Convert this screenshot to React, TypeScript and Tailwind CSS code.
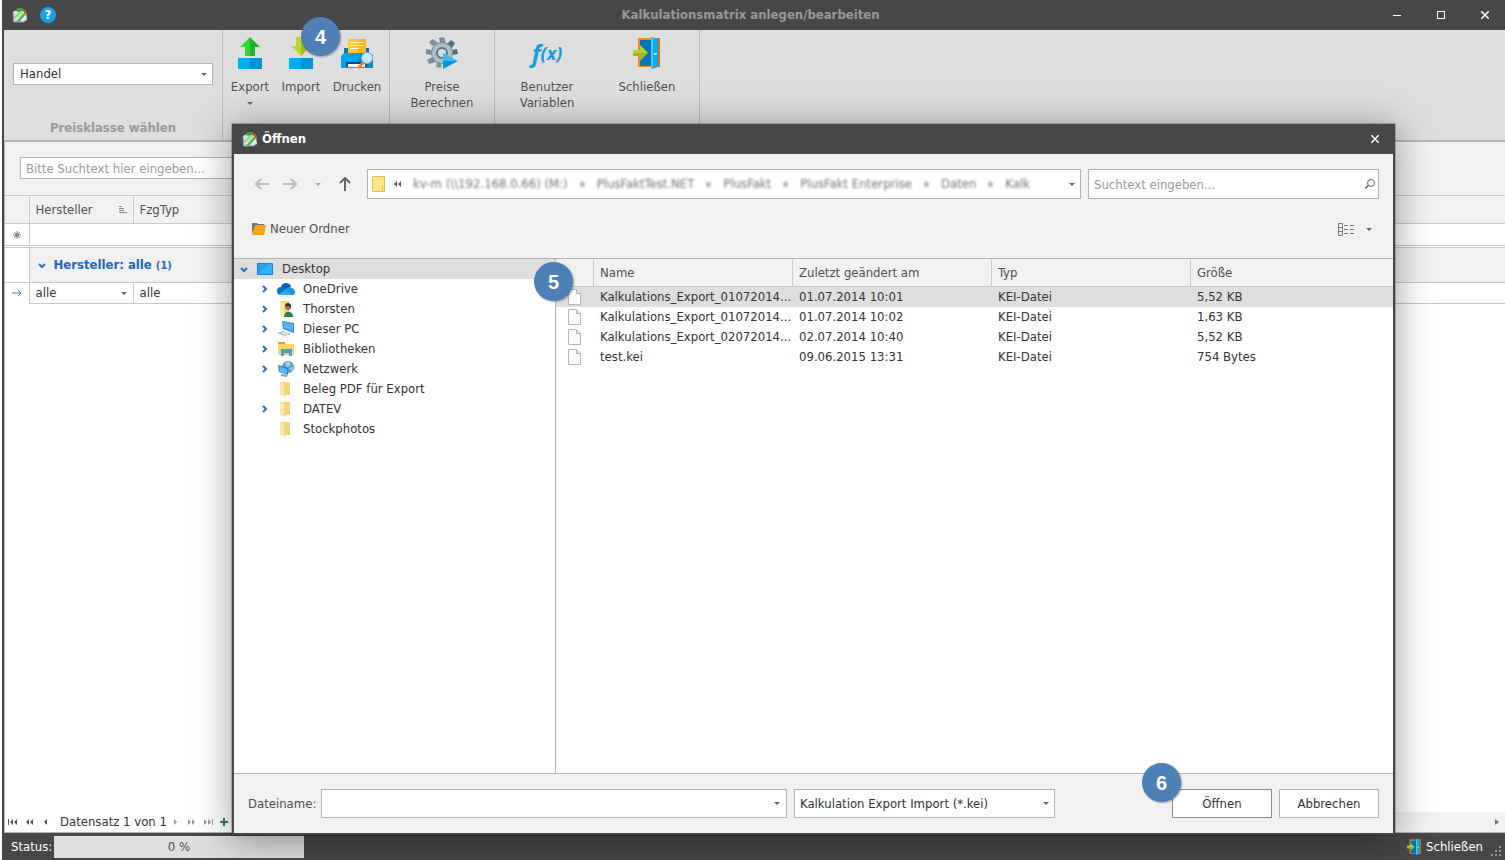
import { useState } from 'react';
import type { ReactNode } from 'react';

interface TreeItem {
  label: string;
  icon: ReactNode;
  expandable: boolean;
}

interface FileEntry {
  id: number;
  name: string;
  modified: string;
  type: string;
  size: string;
}

function AppIcon() {
  return (
    <svg className="size-4 shrink-0" viewBox="0 0 16 16">
      <path d="M1 5l3-2 10 1 1 9-3 2H1z" fill="#dcdcf4" />
      <path d="M1 6l1 9h10l2-2" fill="none" stroke="#8d8ac4" />
      <path d="M3 4c2-4 8-4 9-1l-4 2z" fill="#35a52c" />
      <path d="M10 3l4 0v5z" fill="#d9463b" />
      <path d="M4 14l7-9 3 2-7 8z" fill="#3fc234" />
      <path d="M2 10l6-6 2 1-7 7z" fill="#7ddf6d" />
      <path d="M5 13l7-8" stroke="#ecffe6" />
      <path d="M10 13l4-4" stroke="#fff" />
    </svg>
  );
}

function DoorIcon({ className }: { className: string }) {
  return (
    <svg className={className} viewBox="0 0 32 32">
      <path d="M7 1h22v29H7z" fill="#f08a1c" />
      <path d="M26 1h3v29h-3z" fill="#c96f20" />
      <path d="M9 3h12v26H9z" fill="#0577b9" />
      <path d="M20 0l7 2v28l-7 2z" fill="#00aeef" />
      <path d="M20 0l2 1v30l-2 1z" fill="#49c9f8" />
      <path d="M23 16h3v1l-3 1z" fill="#e9f8ff" />
      <path d="M2 13h7V8l8 8H2z" fill="#b5d334" />
      <path d="M2 16h15l-8 8v-5H2z" fill="#9dbb20" />
    </svg>
  );
}

function ExportIcon() {
  return (
    <svg className="size-8" viewBox="0 0 32 32">
      <path d="M16 0L6 10h5v9h5z" fill="#35d435" />
      <path d="M16 0l10 10h-5v9h-5z" fill="#1fb52a" />
      <path d="M4 21h12v11H4z" fill="#00aeef" />
      <path d="M16 21h12v11H16z" fill="#0093d6" />
    </svg>
  );
}

function ImportIcon() {
  return (
    <svg className="size-8" viewBox="0 0 32 32">
      <path d="M11 0h5v19L6 9h5z" fill="#bcd631" />
      <path d="M16 0h5v9h5L16 19z" fill="#a3bf1c" />
      <path d="M4 21h12v11H4z" fill="#00aeef" />
      <path d="M16 21h12v11H16z" fill="#0093d6" />
    </svg>
  );
}

function PrintIcon() {
  return (
    <svg className="size-8" viewBox="0 0 32 32">
      <path d="M3 11h25v8H3z" fill="#0577b9" />
      <path d="M0 19l3-3h26l3 3v12H0z" fill="#00a4e8" />
      <path d="M16 16h13l3 3v12H16z" fill="#0590d2" />
      <path d="M7 2h18v14H7z" fill="#fdc830" />
      <path d="M16 2h9v14h-9z" fill="#fab91d" />
      <path d="M9 5.500h13M9 8.500h13M9 11.500h9" stroke="#fff3c0" />
      <path d="M5 25h21v5H5z" fill="#0a4f8f" />
      <path d="M7 27h17v3H7z" fill="#f4fbff" />
      <path d="M17 31l6-6" stroke="#e8892b" strokeWidth="3" />
      <circle cx="26" cy="21" r="5" fill="#bfe8fb" stroke="#edf8fd" />
      <circle cx="26" cy="21" r="5.500" fill="none" stroke="#77aecb" />
    </svg>
  );
}

function GearIcon() {
  return (
    <svg className="size-8" viewBox="0 0 32 32">
      <g fill="#7b929e">
        <path d="M14 6l-1-5 5-1 2 6z" />
        <path d="M6 9L3 5l4-3 5 4z" />
        <path d="M5 13l-5-1-0 5 5 1z" />
        <path d="M6 20l-5 3 2 4 7-2z" />
        <path d="M11 25l-1 5 5 1 1-6z" />
        <path d="M21 7l4-4 4 3-3 5z" fill="#566d79" />
        <path d="M26 13l5-1 1 5-5 1z" fill="#566d79" />
      </g>
      <circle cx="16" cy="16" r="11" fill="#7b929e" />
      <circle cx="16" cy="16" r="7.500" fill="none" stroke="#b0bfc7" strokeWidth="5" />
      <circle cx="16" cy="16" r="5" fill="#dedede" stroke="#5f7784" strokeWidth="2" />
      <path d="M17 16l15 8H17z" fill="#35bdf5" />
      <path d="M17 24h15l-15 8z" fill="#0593dc" />
    </svg>
  );
}

function FxIcon() {
  return (
    <span
      className="flex h-8 items-center font-['Open_Sans',sans-serif] font-bold text-[#129fe0] italic"
      aria-hidden="true"
    >
      <span className="text-2xl leading-8">f</span>
      <span className="text-lg leading-8">(x)</span>
    </span>
  );
}

function FolderIcon() {
  return (
    <svg className="h-4 w-[18px]" viewBox="0 0 18 16">
      <path d="M3 1h10v13H3z" fill="#f7d682" />
      <path d="M3 1l5 2v13l-5-2z" fill="#fbe7a8" />
      <path d="M8 3v12" stroke="#efcd76" />
      <path d="M12.500 10v4" stroke="#e3bd5b" />
    </svg>
  );
}

function FileIcon() {
  return (
    <svg className="h-4 w-[13px]" viewBox="0 0 13 16">
      <path d="M.5.5h8l4 4v11H.5z" fill="#fafafa" stroke="#b5b5b5" />
      <path d="M8.500.5v4h4" fill="#e6e6e6" stroke="#b5b5b5" />
    </svg>
  );
}

const treeItems: TreeItem[] = [
  {
    label: 'OneDrive',
    expandable: true,
    icon: (
      <svg className="h-4 w-[18px]" viewBox="0 0 18 16">
        <path d="M4 6c1-5 8-5 10-1l-5 6z" fill="#0a5fb4" />
        <circle cx="4" cy="10" r="4" fill="#1272c7" />
        <path d="M5 14l3-6c5-4 10 0 10 3s-2 3-3 3z" fill="#1f95e6" />
        <path d="M2 13l6-4 8 5H4z" fill="#2bb0f3" />
      </svg>
    ),
  },
  {
    label: 'Thorsten',
    expandable: true,
    icon: (
      <svg className="h-4 w-[18px]" viewBox="0 0 18 16">
        <path d="M3 0h9v13H3z" fill="#f5d37b" />
        <path d="M3 0l4 2v13l-4-2z" fill="#fbe7a8" />
        <circle cx="11" cy="6" r="3" fill="#a06d45" />
        <path d="M8 5c0-4 6-4 6 0v2l-2-2z" fill="#3b2f28" />
        <path d="M7 16c0-7 9-7 9 0z" fill="#2f7d52" />
      </svg>
    ),
  },
  {
    label: 'Dieser PC',
    expandable: true,
    icon: (
      <svg className="h-4 w-[18px]" viewBox="0 0 18 16">
        <path d="M5 0l12 2v10L6 8z" fill="#2d8fd6" />
        <path d="M6 1l10 2v7L7 7z" fill="#56b5f3" />
        <path d="M0 12l6-2 8 3-6 2z" fill="#b1b9bf" />
        <path d="M3 12l4-1 5 2-3 1z" fill="#e3e7ea" />
      </svg>
    ),
  },
  {
    label: 'Bibliotheken',
    expandable: true,
    icon: (
      <svg className="h-4 w-[18px]" viewBox="0 0 18 16">
        <path d="M1 1h7v3H1z" fill="#d9a032" />
        <path d="M1 3h16v11H1z" fill="#fcd467" />
        <path d="M4 15V8h11v7h-3v-3H7v3z" fill="#4c9bc9" />
      </svg>
    ),
  },
  {
    label: 'Netzwerk',
    expandable: true,
    icon: (
      <svg className="h-4 w-[18px]" viewBox="0 0 18 16">
        <circle cx="11" cy="6" r="6" fill="#5d9dbd" />
        <path d="M8 2l4-1 2 3-4 2zM12 7l4-1-1 4z" fill="#a8d5e6" />
        <path d="M1 4l10 3v7L2 11z" fill="#2381cc" />
        <path d="M2 5l8 3v5l-7-2z" fill="#56b8f5" />
        <path d="M4 14l6 1" stroke="#8d979e" strokeWidth="2" />
      </svg>
    ),
  },
  { label: 'Beleg PDF für Export', expandable: false, icon: <FolderIcon /> },
  { label: 'DATEV', expandable: true, icon: <FolderIcon /> },
  { label: 'Stockphotos', expandable: false, icon: <FolderIcon /> },
];

const files: FileEntry[] = [
  { id: 1, name: 'Kalkulations_Export_01072014...', modified: '01.07.2014 10:01', type: 'KEI-Datei', size: '5,52 KB' },
  { id: 2, name: 'Kalkulations_Export_01072014...', modified: '01.07.2014 10:02', type: 'KEI-Datei', size: '1,63 KB' },
  { id: 3, name: 'Kalkulations_Export_02072014...', modified: '02.07.2014 10:40', type: 'KEI-Datei', size: '5,52 KB' },
  { id: 4, name: 'test.kei', modified: '09.06.2015 13:31', type: 'KEI-Datei', size: '754 Bytes' },
];

const crumbs = ['kv-m (\\\\192.168.0.66) (M:)', 'PlusFaktTest.NET', 'PlusFakt', 'PlusFakt Enterprise', 'Daten', 'Kalk'];

function Caret({ className = 'text-[#666]' }: { className?: string }) {
  return (
    <svg className={`h-[3px] w-1.5 shrink-0 ${className}`} viewBox="0 0 6 3">
      <path d="M0 0h6L3 3z" fill="currentColor" />
    </svg>
  );
}

function Chevron({ open = false }: { open?: boolean }) {
  return (
    <svg className="size-2 shrink-0" viewBox="0 0 8 8" fill="none" stroke="#2a6fc4" strokeWidth="2">
      <path d={open ? 'M1 3l3 3 3-3' : 'M2 1l3 3-3 3'} />
    </svg>
  );
}

function CloseX() {
  return (
    <svg className="size-2" viewBox="0 0 8 8" stroke="#fff" strokeWidth="1.500">
      <path d="M0 0l8 8M8 0L0 8" />
    </svg>
  );
}

function StepBadge({ value, className }: { value: number; className: string }) {
  return (
    <span
      className={`absolute z-20 flex size-[39px] items-center justify-center rounded-full bg-[#4d80b6] font-['Liberation_Sans',sans-serif] text-xl font-bold text-white shadow-[1px_1px_2px_rgba(0,0,0,0.35)] ${className}`}
    >
      {value}
    </span>
  );
}

interface RibbonButtonProps {
  icon: ReactNode;
  lines: string[];
  className: string;
  menu?: boolean;
  badge?: ReactNode;
}

function RibbonButton({ icon, lines, className, menu, badge }: RibbonButtonProps) {
  return (
    <button type="button" className={`relative flex flex-col items-center ${className}`}>
      {icon}
      <span className="mt-2.5 flex flex-col leading-4 text-[#505050]">
        {lines.map((line) => (
          <span key={line}>{line}</span>
        ))}
      </span>
      {menu && <Caret className="mt-[7px] text-[#666]" />}
      {badge}
    </button>
  );
}

function NavGlyph({ d, width, muted }: { d: string; width: number; muted?: boolean }) {
  return (
    <svg width={width} height="6" viewBox={`0 0 ${width} 6`} fill={muted ? '#999' : '#555'}>
      <path d={d} />
    </svg>
  );
}

function Ribbon() {
  return (
    <div className="flex h-28 shrink-0 border-b-2 border-[#b4b4b4] bg-[#dedede]">
      <div className="flex w-[219px] shrink-0 flex-col border-r border-[#b9b9b9] px-[9px] pt-[33px]">
        <div className="relative flex items-center">
          <select
            aria-label="Preisklasse"
            className="h-[22px] w-full appearance-none border border-[#b4b4b4] bg-white px-1.5 text-[#333]"
          >
            <option>Handel</option>
          </select>
          <span className="pointer-events-none absolute right-1.5">
            <Caret />
          </span>
        </div>
        <div className="mt-[34px] text-center leading-[18px] font-bold text-[#999]">Preisklasse wählen</div>
      </div>
      <div className="flex w-[167px] shrink-0 border-r border-[#b9b9b9] pt-[7px]">
        <RibbonButton icon={<ExportIcon />} lines={['Export']} menu className="w-[54px]" />
        <RibbonButton
          icon={<ImportIcon />}
          lines={['Import']}
          className="w-12"
          badge={<StepBadge value={4} className="-top-5 left-6" />}
        />
        <RibbonButton icon={<PrintIcon />} lines={['Drucken']} className="w-16" />
      </div>
      <div className="flex w-[105px] shrink-0 justify-center border-r border-[#b9b9b9] pt-[7px]">
        <RibbonButton icon={<GearIcon />} lines={['Preise', 'Berechnen']} className="w-20" />
      </div>
      <div className="flex w-[205px] shrink-0 border-r border-[#b9b9b9] pt-[7px] pl-0.5">
        <RibbonButton icon={<FxIcon />} lines={['Benutzer', 'Variablen']} className="w-[100px]" />
        <RibbonButton icon={<DoorIcon className="size-8" />} lines={['Schließen']} className="w-[100px]" />
      </div>
    </div>
  );
}

function MatrixGrid() {
  return (
    <table className="w-full table-fixed border-collapse text-left text-[#333]">
      <colgroup>
        <col className="w-6" />
        <col className="w-[104px]" />
        <col />
      </colgroup>
      <thead className="bg-[#f1f1f1]">
        <tr className="h-7 border-y border-[#c9c9c9]">
          <th className="border-r border-[#c9c9c9]" />
          <th className="border-r border-[#c9c9c9] px-1.5 font-normal text-[#505050]">
            <span className="flex items-center justify-between">
              Hersteller
              <svg className="h-2 w-2" viewBox="0 0 8 8" stroke="#888">
                <path d="M0 .5h3M0 2.500h5M0 4.500h5M0 6.500h8" />
              </svg>
            </span>
          </th>
          <th className="px-1.5 font-normal text-[#505050]">FzgTyp</th>
        </tr>
      </thead>
      <tbody>
        <tr className="h-[22px] border-b border-[#c9c9c9]">
          <td className="border-r border-[#c9c9c9]">
            <svg className="mx-auto size-2" viewBox="0 0 8 8" stroke="#888">
              <path d="M4 0v8M0 4h8M1 1l6 6M7 1L1 7" />
              <circle cx="4" cy="4" r="1.500" fill="#888" />
            </svg>
          </td>
          <td colSpan={2} />
        </tr>
        <tr className="h-0.5 border-b border-[#c9c9c9]">
          <td colSpan={3} />
        </tr>
        <tr className="h-[35px] border-b border-[#c9c9c9]">
          <td className="border-r border-[#c9c9c9]" />
          <td colSpan={2} className="bg-[#f1f1f1] px-2 font-bold text-[#1f66c1]">
            <button type="button" className="flex items-center gap-2">
              <Chevron open />
              <span>
                Hersteller: alle <span className="text-[11px]">(1)</span>
              </span>
            </button>
          </td>
        </tr>
        <tr className="h-[21px]">
          <td>
            <svg className="mx-auto h-2 w-2.5" viewBox="0 0 10 8" fill="none" stroke="#3a7cc7">
              <path d="M0 4h9M6 1l3 3-3 3" />
            </svg>
          </td>
          <td className="border border-[#c9c9c9] px-1.5">
            <span className="flex items-center justify-between">
              alle
              <Caret />
            </span>
          </td>
          <td className="border-b border-[#c9c9c9] px-1.5">alle</td>
        </tr>
      </tbody>
    </table>
  );
}

function RecordNavigator() {
  return (
    <div className="flex h-5 items-center bg-white">
      <div className="flex items-center pl-[3px] text-[#333]">
        <button type="button" aria-label="Erster Datensatz" className="w-[18px]">
          <NavGlyph width={9} d="M0 0h1v6H0zM5 0v6L2 3zM9 0v6L6 3z" />
        </button>
        <button type="button" aria-label="Seite zurück" className="w-[18px]">
          <NavGlyph width={7} d="M3 0v6L0 3zM7 0v6L4 3z" />
        </button>
        <button type="button" aria-label="Zurück" className="w-4">
          <NavGlyph width={3} d="M3 0v6L0 3z" />
        </button>
        <span className="w-[110px] whitespace-nowrap">Datensatz 1 von 1</span>
        <button type="button" aria-label="Weiter" className="ml-1 w-3.5">
          <NavGlyph width={3} muted d="M0 0v6l3-3z" />
        </button>
        <button type="button" aria-label="Seite vor" className="w-4">
          <NavGlyph width={7} muted d="M0 0v6l3-3zM4 0v6l3-3z" />
        </button>
        <button type="button" aria-label="Letzter Datensatz" className="w-4">
          <NavGlyph width={9} muted d="M0 0v6l3-3zM4 0v6l3-3zM8 0h1v6H8z" />
        </button>
        <button type="button" aria-label="Hinzufügen">
          <svg className="size-2" viewBox="0 0 8 8" stroke="#2e8049" strokeWidth="2">
            <path d="M4 0v8M0 4h8" />
          </svg>
        </button>
      </div>
      <div className="ml-4 flex h-full flex-1 items-center justify-end bg-[#f1f1f1] pr-1.5">
        <svg className="h-1.5 w-1" viewBox="0 0 4 6" fill="#777">
          <path d="M0 0v6l4-3z" />
        </svg>
      </div>
    </div>
  );
}

function OpenDialog() {
  const [selected, setSelected] = useState(1);

  return (
    <div
      role="dialog"
      aria-label="Öffnen"
      className="absolute top-[124px] right-[110px] bottom-[25px] left-[230px] z-10 flex flex-col border-2 border-t-0 border-[#474747] bg-[#f1f1f1] shadow-[0_0_0_1px_rgba(0,0,0,0.2),0_4px_36px_rgba(0,0,0,0.4)]"
    >
      <StepBadge value={5} className="top-[138px] left-[300px]" />
      <div className="flex h-[30px] shrink-0 items-center bg-[#474747] pr-3.5 pl-2">
        <AppIcon />
        <h2 className="ml-1 flex-1 font-bold text-white">Öffnen</h2>
        <button type="button" aria-label="Schließen">
          <CloseX />
        </button>
      </div>

      <div className="flex h-[105px] shrink-0 flex-col border-b border-[#b4b4b4] px-3.5 pt-[15px]">
        <div className="flex h-[30px]">
          <div className="flex w-[119px] shrink-0 items-center pl-[7px]">
            <button type="button" aria-label="Zurück" className="w-7">
              <svg className="h-3 w-3.5" viewBox="0 0 14 12" fill="none" stroke="#bbb" strokeWidth="2">
                <path d="M14 6H1M6 1L1 6l5 5" />
              </svg>
            </button>
            <button type="button" aria-label="Vorwärts" className="w-8">
              <svg className="h-3 w-3.5" viewBox="0 0 14 12" fill="none" stroke="#bbb" strokeWidth="2">
                <path d="M0 6h13M8 1l5 5-5 5" />
              </svg>
            </button>
            <button type="button" aria-label="Verlauf" className="w-6">
              <Caret className="text-[#aaa]" />
            </button>
            <button type="button" aria-label="Nach oben">
              <svg className="h-3.5 w-3" viewBox="0 0 12 14" fill="none" stroke="#666" strokeWidth="2">
                <path d="M6 14V1M1 6l5-5 5 5" />
              </svg>
            </button>
          </div>
          <nav
            aria-label="Pfad"
            className="flex min-w-0 flex-1 items-center overflow-hidden border border-[#b4b4b4] bg-white pr-[5px] pl-1"
          >
            <svg className="h-4 w-3.5 shrink-0" viewBox="0 0 14 16">
              <path d="M.5.5h12v15H.5z" fill="#fde58b" stroke="#e5bf4b" />
              <path d="M10.500 10.500h2v5h-2z" fill="#fff0b0" stroke="#e5bf4b" />
            </svg>
            <span className="mr-3 ml-2 flex">
              <NavGlyph width={7} d="M3 0v6L0 3zM7 0v6L4 3z" />
            </span>
            {crumbs.map((crumb, i) => (
              <span key={crumb} className="flex items-center whitespace-nowrap text-[#777] blur-[1px]">
                {i > 0 && <span className="mr-3 ml-3 size-[5px] bg-[#bbb]" />}
                <a href="#">{crumb}</a>
              </span>
            ))}
            <button type="button" aria-label="Pfad wählen" className="ml-auto">
              <Caret />
            </button>
          </nav>
          <div className="ml-[7px] flex w-[291px] shrink-0 items-center border border-[#b4b4b4] bg-white pr-[3px]">
            <input
              type="text"
              aria-label="Suchtext"
              placeholder="Suchtext eingeben..."
              className="h-full min-w-0 flex-1 px-[5px] outline-none placeholder:text-[#999]"
            />
            <svg className="size-2.5" viewBox="0 0 10 10" fill="none" stroke="#666">
              <circle cx="6" cy="4" r="3.500" />
              <path d="M3.500 6.500L0 9.500" strokeWidth="1.500" />
            </svg>
          </div>
        </div>
        <div className="mt-5 flex h-5 items-center justify-between pr-[7px] pl-1">
          <button type="button" className="flex items-center gap-1 text-[#505050]">
            <svg className="h-3 w-3.5" viewBox="0 0 14 12">
              <path d="M0 0h5l1 1h6v3H3L0 11z" fill="#777" />
              <path d="M3 2h11l-2 10H0z" fill="#fca311" />
            </svg>
            Neuer Ordner
          </button>
          <button type="button" aria-label="Ansicht" className="flex items-center gap-3">
            <svg className="h-[13px] w-4" viewBox="0 0 16 13" fill="none" stroke="#777">
              <path d="M.5.5h4v12h-4zM.5 4.500h4M.5 8.500h4M6 2.500h4M12 2.500h4M6 6.500h4M12 6.500h4M6 10.500h4M12 10.500h4" />
            </svg>
            <Caret />
          </button>
        </div>
      </div>

      <div className="flex min-h-0 flex-1 bg-white text-[#333]">
        <ul className="w-[322px] shrink-0 border-r border-[#b4b4b4]">
          <li>
            <button type="button" className="flex h-5 w-full items-center bg-[#dedede] pl-1.5">
              <Chevron open />
              <svg className="ml-[9px] h-3 w-4" viewBox="0 0 16 12">
                <path d="M.5.5h15v11H.5z" fill="#1ea1f7" stroke="#1585d8" />
                <path d="M1 11L12 1h3v10z" fill="#38b0fb" />
              </svg>
              <span className="ml-[9px]">Desktop</span>
            </button>
            <ul>
              {treeItems.map((item) => (
                <li key={item.label}>
                  <button type="button" className="flex h-5 w-full items-center pl-[27px]">
                    <span className="flex w-4">{item.expandable && <Chevron />}</span>
                    {item.icon}
                    <span className="ml-2">{item.label}</span>
                  </button>
                </li>
              ))}
            </ul>
          </li>
        </ul>
        <div className="min-w-0 flex-1">
          <table className="w-full table-fixed border-separate border-spacing-0 text-left">
            <colgroup>
              <col className="w-[38px]" />
              <col className="w-[199px]" />
              <col className="w-[199px]" />
              <col className="w-[199px]" />
              <col />
            </colgroup>
            <thead className="bg-[#f1f1f1] text-[#505050]">
              <tr className="h-7">
                <th className="border-r border-b border-[#c9c9c9]" />
                <th className="border-r border-b border-[#c9c9c9] px-1.5 font-normal">Name</th>
                <th className="border-r border-b border-[#c9c9c9] px-1.5 font-normal">Zuletzt geändert am</th>
                <th className="border-r border-b border-[#c9c9c9] px-1.5 font-normal">Typ</th>
                <th className="border-b border-[#c9c9c9] px-1.5 font-normal">Größe</th>
              </tr>
            </thead>
            <tbody>
              {files.map((file) => (
                <tr
                  key={file.id}
                  onClick={() => setSelected(file.id)}
                  className={file.id === selected ? 'h-5 bg-[#dedede]' : 'h-5'}
                >
                  <td className="pl-3">
                    <FileIcon />
                  </td>
                  <td className="px-1.5 whitespace-nowrap">{file.name}</td>
                  <td className="px-1.5">{file.modified}</td>
                  <td className="px-1.5">{file.type}</td>
                  <td className="px-1.5">{file.size}</td>
                </tr>
              ))}
            </tbody>
          </table>
        </div>
      </div>

      <div className="flex h-[60px] shrink-0 items-center border-t border-[#b4b4b4] px-3.5 text-[#333]">
        <label htmlFor="dateiname" className="w-[73px] shrink-0 text-[#505050]">
          Dateiname:
        </label>
        <div className="flex h-[29px] w-[466px] items-center border border-[#b4b4b4] bg-white pr-1.5">
          <input id="dateiname" type="text" className="h-full min-w-0 flex-1 px-1.5 outline-none" />
          <Caret />
        </div>
        <div className="relative ml-[7px] flex w-[261px] items-center">
          <select
            aria-label="Dateityp"
            className="h-[29px] w-full appearance-none border border-[#b4b4b4] bg-white px-[5px]"
          >
            <option>Kalkulation Export Import (*.kei)</option>
          </select>
          <span className="pointer-events-none absolute right-1.5">
            <Caret />
          </span>
        </div>
        <div className="relative ml-auto flex gap-[7px]">
          <button type="button" className="h-[29px] w-[100px] border border-[#8a8a8a] bg-white">
            Öffnen
          </button>
          <button type="button" className="h-[29px] w-[100px] border border-[#b4b4b4] bg-white">
            Abbrechen
          </button>
          <StepBadge value={6} className="-top-[26px] -left-[30px]" />
        </div>
      </div>
    </div>
  );
}

export default function App() {
  return (
    <div className="relative flex h-screen flex-col overflow-hidden border-l-2 border-white bg-[#474747] pl-0.5 font-['DejaVu_Sans_Condensed','Noto_Sans',sans-serif] text-[13px] leading-4">
      <header className="grid h-[30px] shrink-0 grid-cols-[1fr_auto_1fr] items-center pr-4 pl-2 text-white">
        <div className="flex items-center gap-3">
          <AppIcon />
          <button
            type="button"
            aria-label="Hilfe"
            className="flex size-4 items-center justify-center rounded-full bg-[#18a0e4] font-bold"
          >
            ?
          </button>
        </div>
        <h1 className="font-bold text-[#999]">Kalkulationsmatrix anlegen/bearbeiten</h1>
        <div className="flex justify-end gap-9">
          <button type="button" aria-label="Minimieren" className="flex w-2 items-center">
            <span className="h-px w-full bg-white" />
          </button>
          <button type="button" aria-label="Maximieren" className="size-2 border border-white" />
          <button type="button" aria-label="Schließen">
            <CloseX />
          </button>
        </div>
      </header>

      <Ribbon />

      <main className="flex min-h-0 flex-1 flex-col border-b border-l border-[#b4b4b4] bg-white">
        <div className="h-[53px] shrink-0 bg-[#f1f1f1] px-[15px] pt-[15px]">
          <input
            type="text"
            aria-label="Suche"
            placeholder="Bitte Suchtext hier eingeben..."
            className="h-[22px] w-72 border border-[#b4b4b4] bg-white px-[5px] placeholder:text-[#999]"
          />
        </div>
        <div className="flex-1">
          <MatrixGrid />
        </div>
        <RecordNavigator />
      </main>

      <footer className="flex h-[27px] shrink-0 items-center pr-1 pl-[7px] text-white">
        <span className="w-[43px]">Status:</span>
        <div className="h-[22px] w-[250px] bg-[#dedede] text-center leading-[22px] text-[#505050]">0 %</div>
        <button type="button" className="ml-auto flex items-center gap-1">
          <DoorIcon className="size-4" />
          Schließen
        </button>
        <svg className="mt-2 ml-2 size-2.5" viewBox="0 0 10 10" fill="#999">
          <path d="M8 0h2v2H8zM4 4h2v2H4zM8 4h2v2H8zM0 8h2v2H0zM4 8h2v2H4zM8 8h2v2H8z" />
        </svg>
      </footer>

      <OpenDialog />
    </div>
  );
}
